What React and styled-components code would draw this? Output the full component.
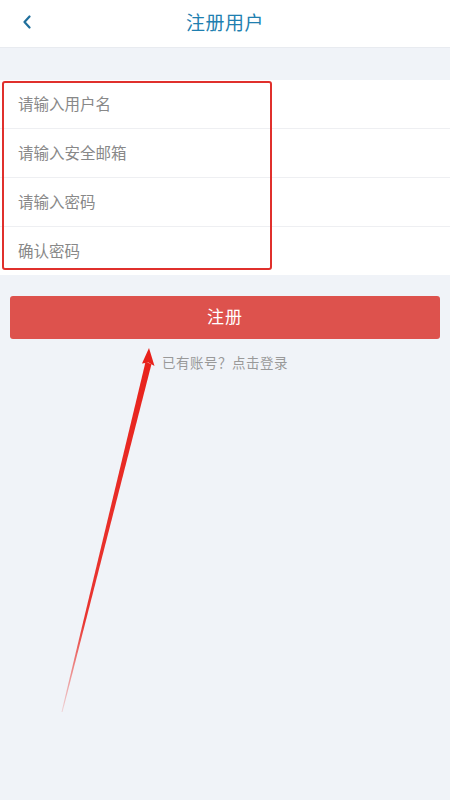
import React from "react";
import styled, { createGlobalStyle } from "styled-components";

const Global = createGlobalStyle`
  html, body { margin: 0; padding: 0; background: #f0f3f8; }
  body { font-family: "Noto Sans CJK SC", "Noto Sans", sans-serif; }
  #root { min-height: 800px; }
`;

const Page = styled.div`
  position: relative;
  width: 450px;
  height: 800px;
  background: #f0f3f8;
  overflow: hidden;
`;

const Header = styled.header`
  height: 47px;
  background: #fff;
  border-bottom: 1px solid #e8ebf0;
  display: flex;
  align-items: center;
  justify-content: center;
  position: relative;
`;

const Back = styled.button`
  position: absolute;
  left: 16px;
  top: 10px;
  width: 22px;
  height: 24px;
  border: 0;
  background: none;
  padding: 0;
  display: flex;
  align-items: center;
  justify-content: center;
`;

const Title = styled.h1`
  margin: 0;
  font-size: 19px;
  font-weight: 400;
  color: #1f7fb0;
  letter-spacing: 0.5px;
  margin-top: -4px;
`;

const Form = styled.div`
  margin-top: 32px;
  background: #fff;
  position: relative;
`;

const Row = styled.div`
  height: ${(p) => (p.$first ? "48px" : "49px")};
  display: flex;
  align-items: center;
  padding-left: 18px;
  font-size: 15.5px;
  color: #888;
  border-top: ${(p) => (p.$first ? "none" : "1px solid #eeeff2")};
  box-sizing: border-box;
  padding-bottom: 3px;
`;

const Highlight = styled.div`
  position: absolute;
  left: 2px;
  top: 1px;
  width: 266px;
  height: 185px;
  border: 2px solid #e0302c;
  border-radius: 3px;
  pointer-events: none;
`;

const Actions = styled.div`
  padding: 21px 10px 0;
  display: flex;
  flex-direction: column;
  align-items: center;
`;

const Submit = styled.button`
  width: 100%;
  height: 43px;
  border: 0;
  border-radius: 3px;
  background: #dd524d;
  color: #fff;
  font-family: inherit;
  font-size: 17px;
  letter-spacing: 1px;
  padding-bottom: 5px;
`;

const LoginLink = styled.div`
  margin-top: 13px;
  font-size: 13.5px;
  color: #999;
  letter-spacing: 0.5px;
`;

const Arrow = styled.svg`
  position: absolute;
  left: 0;
  top: 0;
  pointer-events: none;
`;

export default function App() {
  return (
    <Page>
      <Global />
      <Header>
        <Back aria-label="back">
          <svg width="10" height="14" viewBox="0 0 10 14">
            <path d="M7.5 1.5 L2.5 7 L7.5 12.5" fill="none" stroke="#1f6f9c" strokeWidth="2.2" strokeLinecap="round" strokeLinejoin="round" />
          </svg>
        </Back>
        <Title>注册用户</Title>
      </Header>
      <Form>
        <Row $first>请输入用户名</Row>
        <Row>请输入安全邮箱</Row>
        <Row>请输入密码</Row>
        <Row>确认密码</Row>
        <Highlight />
      </Form>
      <Actions>
        <Submit>注册</Submit>
        <LoginLink>已有账号？点击登录</LoginLink>
      </Actions>
      <Arrow width="450" height="800" viewBox="0 0 450 800">
        <defs>
          <linearGradient id="ag" x1="62" y1="712" x2="149" y2="350" gradientUnits="userSpaceOnUse">
            <stop offset="0" stopColor="#e8211b" stopOpacity="0.15" />
            <stop offset="0.25" stopColor="#e8211b" stopOpacity="0.9" />
            <stop offset="1" stopColor="#e8211b" />
          </linearGradient>
        </defs>
        <polygon points="61.5,712 145.5,362 151.5,364 62.5,712" fill="url(#ag)" />
        <polygon points="149,348 154.5,366 148.5,362.5 142,363.5" fill="#e8211b" />
      </Arrow>
    </Page>
  );
}
